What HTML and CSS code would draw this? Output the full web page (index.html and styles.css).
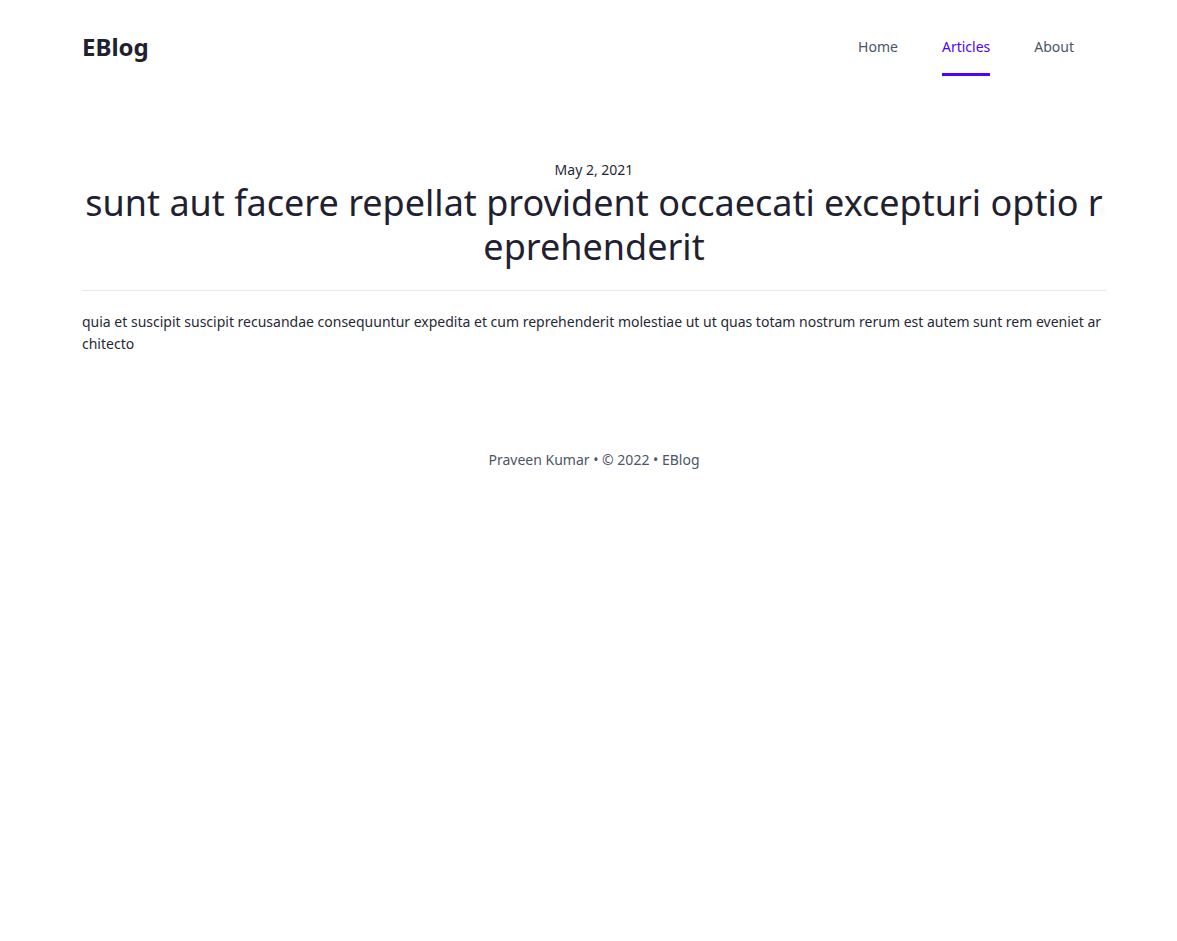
FILE: index.html
```html
<!DOCTYPE html>
<html lang="en">
<head>
<meta charset="utf-8">
<title>EBlog</title>
<link rel="stylesheet" href="styles.css">
</head>
<body>
<div class="container">
  <header class="header">
    <a class="logo" href="#">EBlog</a>
    <nav class="nav">
      <a class="nav-link" href="#">Home</a>
      <a class="nav-link active" href="#">Articles</a>
      <a class="nav-link" href="#">About</a>
    </nav>
  </header>
  <main class="article">
    <div class="date">May 2, 2021</div>
    <h1 class="title">sunt aut facere repellat provident occaecati excepturi optio reprehenderit</h1>
    <hr class="divider">
    <p class="body">quia et suscipit suscipit recusandae consequuntur expedita et cum reprehenderit molestiae ut ut quas totam nostrum rerum est autem sunt rem eveniet architecto</p>
  </main>
  <footer class="footer">Praveen Kumar • © 2022 • EBlog</footer>
</div>
</body>
</html>
```

FILE: styles.css
```css
* { box-sizing: border-box; }
html, body { margin: 0; padding: 0; background: #ffffff; }
body {
  font-family: "Noto Sans", "Open Sans", sans-serif;
  color: #1f2937;
}
.container {
  width: 1024px;
  margin-left: 82px;
}
.header {
  display: flex;
  justify-content: space-between;
  align-items: center;
  padding-top: 18px;
  height: 76px;
}
.logo {
  font-size: 24px;
  line-height: 32px;
  font-weight: 700;
  color: #1f2130;
  text-decoration: none;
}
.nav {
  display: flex;
  gap: 44px;
  padding-right: 32px;
  align-self: stretch;
}
.nav-link {
  display: block;
  font-size: 14px;
  line-height: 20px;
  padding-top: 19px;
  padding-bottom: 16px;
  border-bottom: 3px solid transparent;
  color: #4a5568;
  text-decoration: none;
}
.nav-link.active {
  color: #5000ff;
  border-bottom-color: #5000ff;
}
.article {
  margin-top: 84px;
}
.date {
  text-align: center;
  font-size: 14px;
  line-height: 20px;
  color: #1f2937;
}
.title {
  margin: 1px 0 0;
  text-align: center;
  font-size: 36px;
  line-height: 44px;
  font-weight: 400;
  color: #1f2130;
  word-break: break-all;
}
.divider {
  border: 0;
  border-top: 1px solid #e5e7eb;
  margin: 21px 0 20px;
}
.body {
  margin: 0;
  font-size: 14px;
  line-height: 22px;
  color: #1f2937;
  word-break: break-all;
}
.footer {
  margin-top: 95px;
  text-align: center;
  font-size: 14px;
  line-height: 20px;
  color: #4a5568;
}
```
